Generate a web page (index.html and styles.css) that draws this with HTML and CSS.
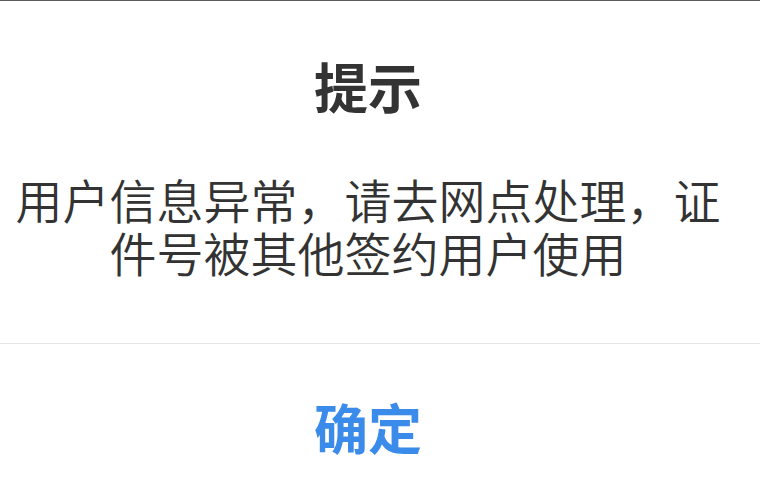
FILE: index.html
```html
<!DOCTYPE html>
<html lang="zh-CN">
<head>
<meta charset="utf-8">
<title>提示</title>
<link rel="stylesheet" href="styles.css">
</head>
<body>
<div class="topbar"></div>
<div class="dialog">
  <div class="title">提示</div>
  <div class="message">用户信息异常，请去网点处理，证件号被其他签约用户使用</div>
  <div class="footer">
    <div class="confirm">确定</div>
  </div>
</div>
</body>
</html>
```
FILE: styles.css
```css
html, body {
  margin: 0;
  padding: 0;
  background: #ffffff;
  width: 760px;
  height: 481px;
  overflow: hidden;
}
body {
  font-family: "Noto Sans CJK SC", "Noto Sans", sans-serif;
  color: #333333;
}
.topbar {
  height: 1px;
  background: #5a5a5a;
}
.dialog {
  display: flex;
  flex-direction: column;
}
.title {
  padding: 50px 24px 0 0;
  font-size: 54px;
  line-height: 70px;
  font-weight: 700;
  text-align: center;
  color: #333333;
}
.message {
  margin-top: 51px;
  padding: 0 34px 0 10px;
  font-size: 47px;
  line-height: 53px;
  font-weight: 350;
  text-align: center;
  color: #333333;
  height: 106px;
}
.footer {
  margin-top: 65px;
  border-top: 1px solid #e5e5e5;
  padding: 48px 24px 0 0;
}
.confirm {
  font-size: 54px;
  line-height: 70px;
  font-weight: 700;
  text-align: center;
  color: #3b8beb;
}
```
